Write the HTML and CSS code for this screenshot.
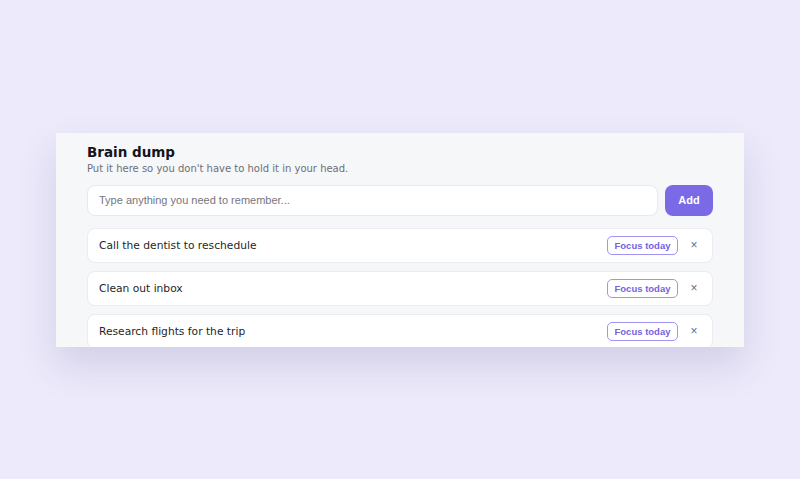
FILE: index.html
```html
<!DOCTYPE html>
<html lang="en">
<head>
    <meta charset="UTF-8">
    <meta name="viewport" content="width=device-width, initial-scale=1.0">
    <title>Brain dump</title>
    <link rel="stylesheet" href="styles.css">
</head>
<body>
    <div class="panel">
        <h1>Brain dump</h1>
        <p class="subtitle">Put it here so you don't have to hold it in your head.</p>

        <div class="entry">
            <input type="text" class="entry-input" placeholder="Type anything you need to remember...">
            <button class="add-btn">Add</button>
        </div>

        <ul class="items">
            <li class="item">
                <span class="item-text">Call the dentist to reschedule</span>
                <button class="focus-btn">Focus today</button>
                <button class="remove-btn">×</button>
            </li>
            <li class="item">
                <span class="item-text">Clean out inbox</span>
                <button class="focus-btn">Focus today</button>
                <button class="remove-btn">×</button>
            </li>
            <li class="item">
                <span class="item-text">Research flights for the trip</span>
                <button class="focus-btn">Focus today</button>
                <button class="remove-btn">×</button>
            </li>
        </ul>
    </div>
</body>
</html>
```

FILE: styles.css
```css
html, body {
    height: 100%;
}
body {
    margin: 0;
    background: #edeafb;
    font-family: "DejaVu Sans", sans-serif;
    display: flex;
    align-items: center;
    justify-content: center;
}
.panel {
    width: 688px;
    height: 214px;
    box-sizing: border-box;
    padding: 11px 31px 0;
    background: #f6f7f9;
    overflow: hidden;
    box-shadow: 0 18px 36px rgba(70, 60, 130, 0.16);
}
h1 {
    margin: 0;
    font-size: 13.5px;
    line-height: 16px;
    color: #15141c;
}
.subtitle {
    margin: 2px 0 0;
    font-size: 10px;
    line-height: 13px;
    color: #6e6e78;
}
.entry {
    display: flex;
    gap: 7px;
    margin-top: 10px;
}
.entry-input {
    flex: 1;
    height: 31px;
    box-sizing: border-box;
    padding: 0 11px;
    border: 1px solid #e8e8ee;
    border-radius: 8px;
    background: #fff;
    font-family: "Liberation Sans", Arial, sans-serif;
    font-size: 11px;
    color: #222;
    outline: none;
}
.entry-input::placeholder {
    color: #767680;
}
.add-btn {
    width: 48px;
    height: 31px;
    border: none;
    border-radius: 8px;
    background: #7b6ae6;
    color: #fff;
    font-family: "Liberation Sans", Arial, sans-serif;
    font-weight: bold;
    font-size: 11px;
    cursor: pointer;
}
.items {
    list-style: none;
    margin: 12px 0 0;
    padding: 0;
    display: flex;
    flex-direction: column;
    gap: 8px;
}
.item {
    display: flex;
    align-items: center;
    height: 35px;
    box-sizing: border-box;
    padding: 0 8px 0 11px;
    background: #fff;
    border: 1px solid #ebebf0;
    border-radius: 8px;
}
.item-text {
    flex: 1;
    font-size: 10.7px;
    color: #1f1f26;
}
.focus-btn {
    width: 71px;
    height: 19px;
    padding: 0;
    box-sizing: border-box;
    border: 1px solid #a193f1;
    border-radius: 5px;
    background: #fff;
    color: #7463e0;
    font-family: "Liberation Sans", Arial, sans-serif;
    font-weight: bold;
    font-size: 9.5px;
    cursor: pointer;
}
.remove-btn {
    width: 20px;
    margin-left: 6px;
    padding: 0;
    border: none;
    background: none;
    color: #6e6e78;
    font-family: "Liberation Sans", Arial, sans-serif;
    font-size: 12px;
    cursor: pointer;
}
```
